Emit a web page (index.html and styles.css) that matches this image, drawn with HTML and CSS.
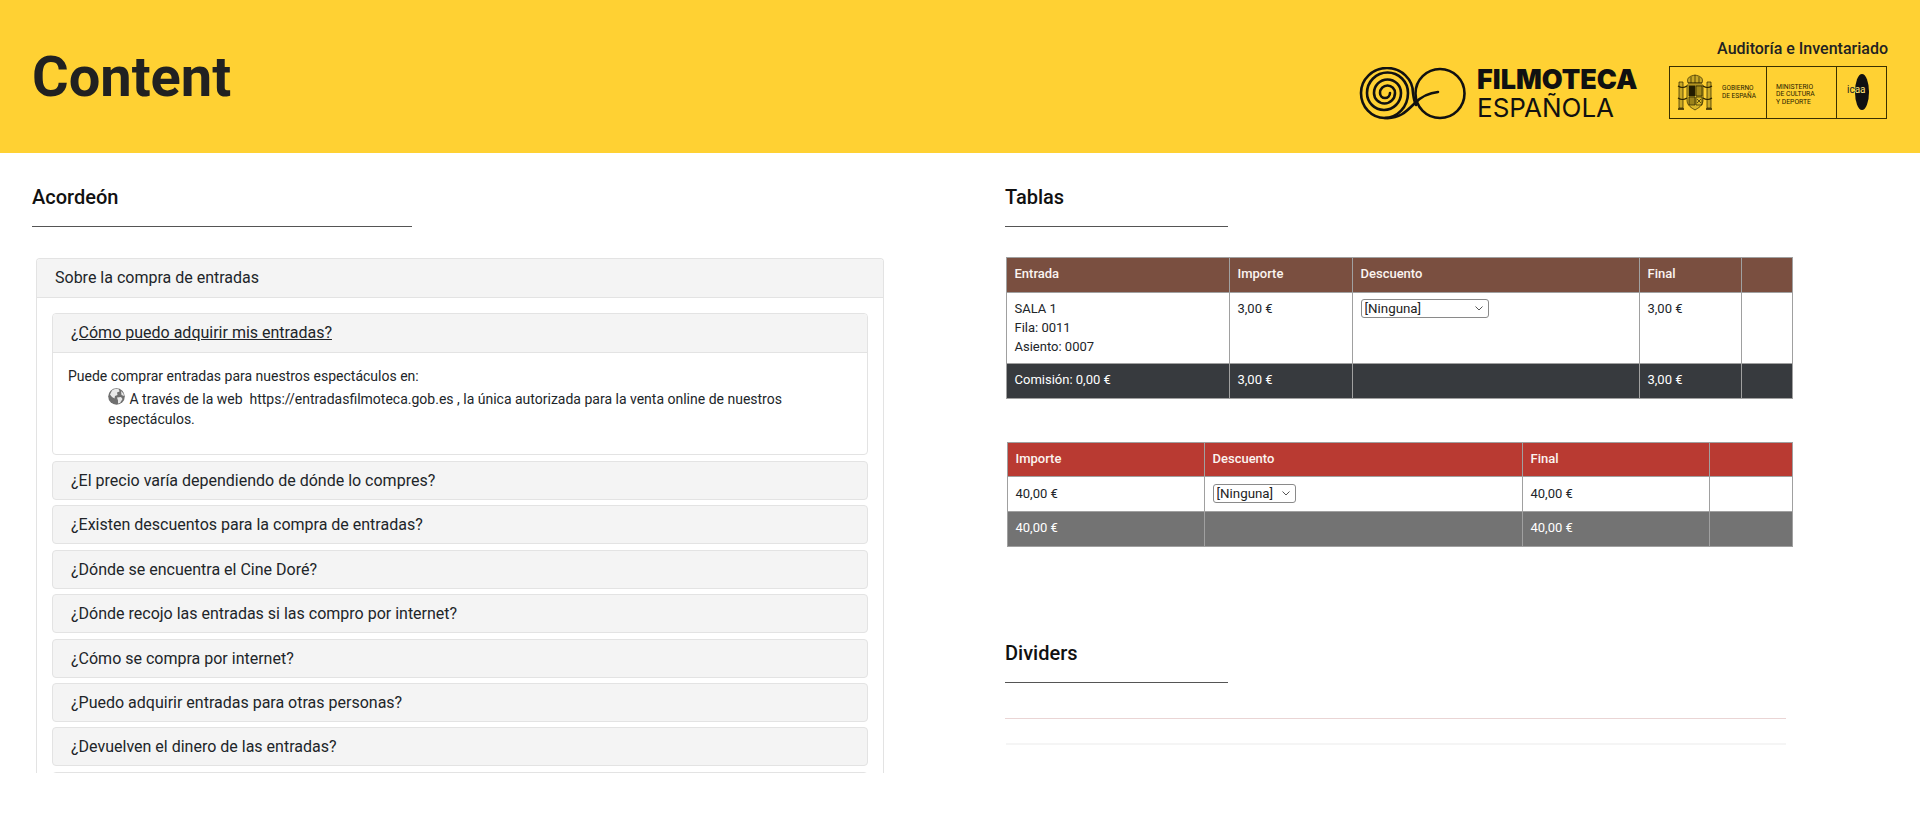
FILE: index.html
```html
<!DOCTYPE html>
<html lang="es">
<head>
<meta charset="utf-8">
<title>Content</title>
<link rel="stylesheet" href="styles.css">
</head>
<body>
<header class="hero">
  <h1 class="hero-title">Content</h1>
  <div class="hero-side">
    <div class="hero-app">Auditoría e Inventariado</div>
    <div class="logos">
      <div class="filmoteca">
        <svg class="spiral" width="108" height="54" viewBox="0 0 108 54" fill="none" stroke="#111" stroke-width="2.6" stroke-linecap="round">
          <path d="M31 26A5 5 0 0 1 21 26A7.5 7.5 0 0 1 36 26A10.5 10.5 0 0 1 15 26A13.5 13.5 0 0 1 42 26A17 17 0 0 1 8 26A20.5 20.5 0 0 1 49 26A23.5 25 0 0 1 2 26A26 25 0 0 1 54 26C54.500 30 55 34 57 38"/>
          <path d="M26 51C40 52 47 45 56 36C63 29 69 26 79 25"/>
          <circle cx="81" cy="26.500" r="24.500"/>
        </svg>
        <div class="filmoteca-name">
          <span class="film-a">FILMOTECA</span>
          <span class="film-b">ESPAÑOLA</span>
        </div>
      </div>
      <div class="gov">
        <div class="gov-cell gov-a">
          <svg width="36" height="38" viewBox="0 0 36 38" fill="none" stroke="#2a2200" stroke-width=".7">
            <path d="M11 9C9 3 14 2 18 1C22 2 27 3 25 9Z" fill="#c9a826"/>
            <path d="M11 9H25M14 3V9M18 1V9M22 3V9"/>
            <path d="M10 11H26V26C26 32 21 34 18 36C15 34 10 32 10 26Z" fill="#d9b72a"/>
            <path d="M12 12H18V22H12Z" fill="#221c00"/>
            <path d="M19 12H25V22H19Z" fill="#a58a1a"/>
            <path d="M12 23H18V31H12ZM19 23H25V31H19Z"/>
            <path d="M13 23V31M15 23V31M17 23V31M20 25L24 29M24 25L20 29"/>
            <path d="M2 8H6V34H2ZM30 8H34V34H30Z" fill="#c9a826"/>
            <path d="M1 12C4 14 7 14 10 12M1 24C4 26 7 26 10 24M26 12C29 14 32 14 35 12M26 24C29 26 32 26 35 24" stroke-width="1.200"/>
            <path d="M1 35H7M29 35H35" stroke-width="1.400"/>
          </svg>
          <span class="gov-text">GOBIERNO<br>DE ESPAÑA</span>
        </div>
        <div class="gov-cell gov-b"><span class="gov-text gov-text-wide">MINISTERIO<br>DE CULTURA<br>Y DEPORTE</span></div>
        <div class="gov-cell gov-c">
          <span class="icaa-disc"></span>
          <span class="icaa-text">ic<span class="icaa-a">aa</span></span>
        </div>
      </div>
    </div>
  </div>
</header>

<main class="page">
  <section class="col-left">
    <h2 class="sec-title">Acordeón</h2>
    <hr class="rule rule-long">
    <div class="card">
      <div class="card-head">Sobre la compra de entradas</div>
      <div class="card-body">
        <div class="acc acc-open">
          <div class="acc-head acc-head-open"><a class="acc-link">¿Cómo puedo adquirir mis entradas?</a></div>
          <div class="acc-panel">
            <p class="panel-lead">Puede comprar entradas para nuestros espectáculos en:</p>
            <p class="panel-item">
              <svg class="globe" width="17" height="17" viewBox="0 0 17 17"><circle cx="8.500" cy="8.500" r="8.300" fill="#6f6f6f"/><path d="M4 2.500C6 1 9 .8 11 1.500L11.500 3.500L9 4.500L9.500 7L7 8L6.500 10.500L4 9L2 6.500ZM9 9.500L13 9L14.500 11L12 15L10 15.500L10 12.500ZM13 3L15.500 5.500L16 8L13.500 7Z" fill="#e8e8e8"/></svg>
              A través de la web &nbsp;https://entradasfilmoteca.gob.es , la única autorizada para la venta online de nuestros espectáculos.
            </p>
          </div>
        </div>
        <div class="acc acc-head">¿El precio varía dependiendo de dónde lo compres?</div>
        <div class="acc acc-head">¿Existen descuentos para la compra de entradas?</div>
        <div class="acc acc-head">¿Dónde se encuentra el Cine Doré?</div>
        <div class="acc acc-head">¿Dónde recojo las entradas si las compro por internet?</div>
        <div class="acc acc-head">¿Cómo se compra por internet?</div>
        <div class="acc acc-head">¿Puedo adquirir entradas para otras personas?</div>
        <div class="acc acc-head">¿Devuelven el dinero de las entradas?</div>
        <div class="acc acc-edge"></div>
      </div>
    </div>
  </section>

  <section class="col-right">
    <h2 class="sec-title">Tablas</h2>
    <hr class="rule rule-short">
    <table class="tbl tbl-brown">
      <colgroup><col class="c223"><col class="c123"><col class="c287"><col class="c102"><col class="c51"></colgroup>
      <thead><tr><th>Entrada</th><th>Importe</th><th>Descuento</th><th>Final</th><th></th></tr></thead>
      <tbody><tr>
        <td>SALA 1<br>Fila: 0011<br>Asiento: 0007</td>
        <td>3,00 €</td>
        <td><span class="sel sel-wide"><select class="sel-input"><option>[Ninguna]</option></select><svg class="sel-arrow" width="8" height="5" viewBox="0 0 8 5" fill="none" stroke="#555"><path d="M.5 .5L4 4L7.500 .5"/></svg></span></td>
        <td>3,00 €</td>
        <td></td>
      </tr></tbody>
      <tfoot><tr><td>Comisión: 0,00 €</td><td>3,00 €</td><td></td><td>3,00 €</td><td></td></tr></tfoot>
    </table>
    <table class="tbl tbl-red">
      <colgroup><col class="c197"><col class="c318"><col class="c187"><col class="c83"></colgroup>
      <thead><tr><th>Importe</th><th>Descuento</th><th>Final</th><th></th></tr></thead>
      <tbody><tr>
        <td>40,00 €</td>
        <td><span class="sel sel-narrow"><select class="sel-input"><option>[Ninguna]</option></select><svg class="sel-arrow" width="8" height="5" viewBox="0 0 8 5" fill="none" stroke="#555"><path d="M.5 .5L4 4L7.500 .5"/></svg></span></td>
        <td>40,00 €</td>
        <td></td>
      </tr></tbody>
      <tfoot><tr><td>40,00 €</td><td></td><td>40,00 €</td><td></td></tr></tfoot>
    </table>
    <h2 class="sec-title sec-title-low">Dividers</h2>
    <hr class="rule rule-short">
    <div class="divider divider-a"></div>
    <div class="divider divider-b"></div>
  </section>
</main>
</body>
</html>
```
FILE: styles.css
```css
* { box-sizing: border-box; }
html, body { margin: 0; height: 825px; overflow: hidden; background: #fff; }
body { font-family: Roboto, "Liberation Sans", sans-serif; color: #212529; font-size: 14px; }

.hero {
  height: 153px;
  background: #ffd133;
  display: flex;
  justify-content: space-between;
  padding: 0 32px;
}
.hero-title {
  margin: 45px 0 0;
  font-size: 56px;
  line-height: 64px;
  font-weight: 700;
  color: #212121;
}
.hero-side { display: flex; flex-direction: column; align-items: flex-end; padding-top: 39px; }
.hero-app { font-size: 16px; line-height: 19px; font-weight: 500; color: #222; }
.logos { display: flex; gap: 32px; margin-top: 8px; margin-right: 1px; }
.filmoteca { display: flex; gap: 10px; margin-top: 1px; }
.spiral { display: block; }
.filmoteca-name { display: flex; flex-direction: column; width: 160px; margin-top: -1px; color: #111; font-family: Inter, Roboto, sans-serif; }
.film-a { font-size: 27px; line-height: 28px; font-weight: 900; white-space: nowrap; }
.film-b { font-size: 26px; line-height: 27px; font-weight: 400; white-space: nowrap; }

.gov { width: 218px; height: 53px; border: 1px solid #3a3000; display: flex; }
.gov-cell { display: flex; align-items: center; height: 100%; color: #2a2200; }
.gov-a { width: 97px; padding-left: 7px; gap: 9px; border-right: 1px solid #3a3000; }
.gov-b { width: 70px; padding: 5px 0 0 9px; border-right: 1px solid #3a3000; }
.gov-c { flex: 1; position: relative; justify-content: center; }
.gov-text { font-size: 6.500px; line-height: 7.500px; }
.gov-text-wide { font-size: 6.800px; }
.icaa-disc { position: absolute; left: 18px; top: 7px; width: 14px; height: 36px; border-radius: 50%; background: #111; }
.icaa-text { position: absolute; left: 10px; top: 17px; font-size: 10px; line-height: 12px; color: #222; }
.icaa-a { color: #ffe27a; }

.page { display: grid; grid-template-columns: 973px 1fr; padding: 32px 0 0 32px; }
.sec-title { margin: 0; font-size: 20px; line-height: 24px; font-weight: 500; color: #111; }
.sec-title-low { margin-top: 94px; }
.rule { border: 0; border-top: 1px solid #555; margin: 17px 0 0; }
.rule-long { width: 380px; }
.rule-short { width: 223px; }

.card {
  width: 848px;
  height: 515px;
  margin: 31px 0 0 4px;
  border: 1px solid #e3e3e3;
  border-bottom: 0;
  border-radius: 4px 4px 0 0;
  overflow: hidden;
}
.card-head {
  height: 39px;
  padding: 0 18px;
  line-height: 38px;
  font-size: 16px;
  background: #f4f4f4;
  border-bottom: 1px solid #e3e3e3;
}
.card-body { padding: 15px 15px 0; }
.acc { display: block; margin-bottom: 5.400px; }
.acc-head {
  height: 39px;
  padding: 0 18px;
  line-height: 37px;
  font-size: 16px;
  background: #f4f4f4;
  border: 1px solid #e3e3e3;
  border-radius: 4px;
}
.acc-open { border: 1px solid #e3e3e3; border-radius: 4px; margin-bottom: 6px; }
.acc-head-open { border: 0; border-bottom: 1px solid #e3e3e3; border-radius: 4px 4px 0 0; padding: 0 18px; line-height: 38px; }
.acc-link { text-decoration: underline; color: #212529; }
.acc-edge { height: 39px; border: 1px solid #e3e3e3; border-radius: 4px; background: #f4f4f4; }
.acc-panel { height: 101px; padding: 13px 15px 0; line-height: 20px; font-size: 14px; }
.panel-lead { margin: 0; }
.panel-item { margin: 0 0 0 40px; padding-right: 50px; }
.globe { vertical-align: -1px; margin-top: 2px; margin-right: 1px; }

.tbl { border-collapse: collapse; table-layout: fixed; font-size: 13px; line-height: 18.700px; }
.tbl th, .tbl td { border: 1px solid #a0a0a0; padding: 7px 7.500px; vertical-align: top; text-align: left; }
.tbl thead th { font-weight: 500; color: #fbf4f0; height: 34.600px; }
.tbl tbody td { padding-top: 7.500px; height: 34.600px; }
.tbl tfoot td { color: #fff; height: 34.600px; }
.tbl-brown tbody td { height: 71.700px; }
.tbl-brown { width: 786px; margin: 30px 0 0 1px; }
.tbl-brown thead th { background: #7a4f40; }
.tbl-brown tfoot td { background: #373a3e; }
.tbl-red { width: 785px; margin: 43px 0 0 2px; }
.tbl-red thead th { background: #b93a32; }
.tbl-red tfoot td { background: #737373; }
.c223 { width: 223px; }
.c123 { width: 123px; }
.c287 { width: 287px; }
.c102 { width: 102px; }
.c51 { width: 51px; }
.c197 { width: 197px; }
.c318 { width: 318px; }
.c187 { width: 187px; }
.c83 { width: 83px; }

.sel { display: block; position: relative; height: 19px; margin-top: -1px; }
.sel-wide { width: 128px; }
.sel-narrow { width: 83px; }
.sel-input {
  appearance: none;
  display: block;
  width: 100%;
  height: 19px;
  padding: 0 3px;
  border: 1px solid #8a8a8a;
  border-radius: 3px;
  background: #fff;
  font: 13.330px/17px Roboto, sans-serif;
  color: #222;
}
.sel-arrow { position: absolute; right: 6px; top: 7px; }

.divider { width: 781px; }
.divider-a { margin-top: 35px; border-top: 1px solid #ead5d5; }
.divider-b { margin-top: 24px; margin-left: 1px; width: 780px; border-top: 2px solid #f5f5f5; }
```
